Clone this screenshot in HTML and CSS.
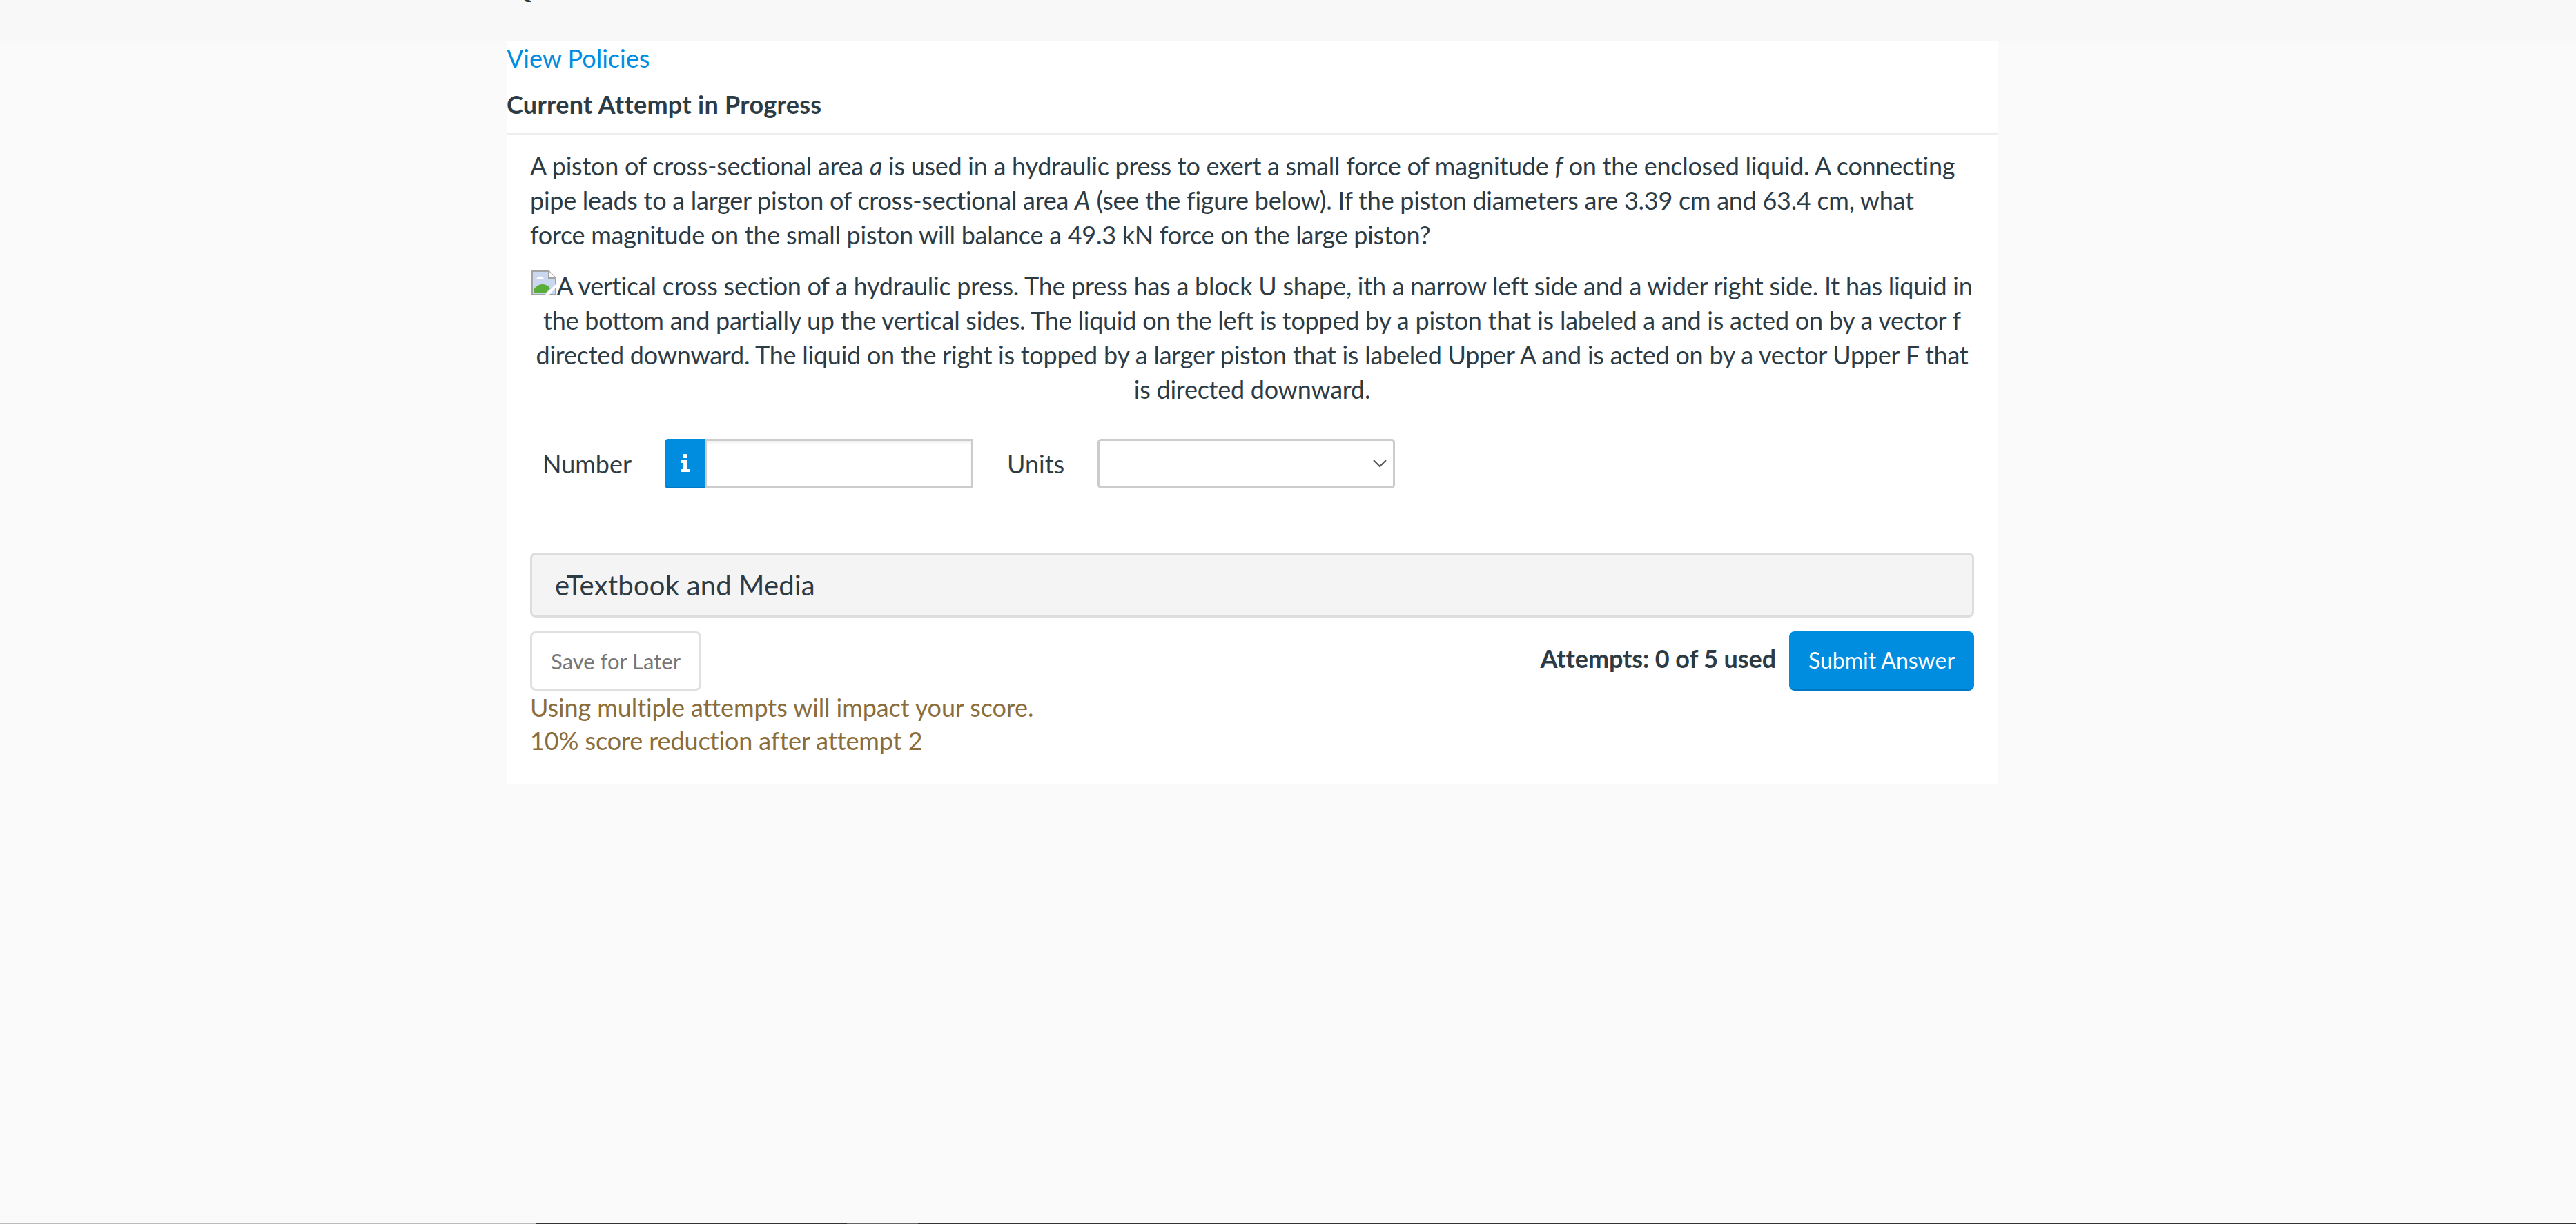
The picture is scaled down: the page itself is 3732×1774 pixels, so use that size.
FILE: index.html
```html
<!DOCTYPE html>
<html lang="en">
<head>
<meta charset="utf-8">
<title>Current Attempt in Progress</title>
<link rel="stylesheet" href="styles.css">
</head>
<body>
<div class="page">
  <header class="topbar"><div class="topbar-title">Question</div></header>
  <main class="card">
    <a class="policies" href="#">View Policies</a>
    <h2 class="attempt-title">Current Attempt in Progress</h2>
    <section class="question">
      <p class="stem">A piston of cross-sectional area <i>a</i> is used in a hydraulic press to exert a small force of magnitude <i>f</i> on the enclosed liquid. A connecting pipe leads to a larger piston of cross-sectional area <i>A</i> (see the figure below). If the piston diameters are 3.39 cm and 63.4 cm, what force magnitude on the small piston will balance a 49.3 kN force on the large piston?</p>
      <p class="figure"><svg class="broken" width="36" height="36" viewBox="0 0 36 36"><path d="M1 1H25L35 11V35H1Z" fill="#c9d7f1" stroke="#a3a3a3" stroke-width="2"/><path d="M25 1V11H35" fill="#fff" stroke="#a3a3a3" stroke-width="2"/><path d="M7 13q2-5 6-4q4-1 5 4Z" fill="#fff"/><path d="M3 33V28Q9 19 17 20Q24 21 27 26L20 33Z" fill="#5bad3a"/><path d="M19 36L36 19V24L25 36Z" fill="#fff"/></svg>A vertical cross section of a hydraulic press. The press has a block U shape, ith a narrow left side and a wider right side. It has liquid in the bottom and partially up the vertical sides. The liquid on the left is topped by a piston that is labeled a and is acted on by a vector f directed downward. The liquid on the right is topped by a larger piston that is labeled Upper A and is acted on by a vector Upper F that is directed downward.</p>
      <div class="answer-row">
        <label class="field-label">Number</label>
        <div class="input-group">
          <span class="info-btn"><svg width="14" height="26" viewBox="0 0 14 26"><rect x="3" y="0" width="7" height="6" rx="1.5" fill="#fff"/><path d="M1 9H10V22H13V26H1V22H4V13H1Z" fill="#fff"/></svg></span>
          <input class="number-input" type="text">
        </div>
        <label class="field-label units-label">Units</label>
        <div class="select-box"><svg width="20" height="12" viewBox="0 0 20 12"><path d="M1 1L10 10L19 1" fill="none" stroke="#555" stroke-width="2"/></svg></div>
      </div>
      <div class="panel">eTextbook and Media</div>
      <div class="actions">
        <button class="btn-save" type="button">Save for Later</button>
        <div class="submit-side">
          <span class="attempts">Attempts: 0 of 5 used</span>
          <button class="btn-submit" type="button">Submit Answer</button>
        </div>
      </div>
      <div class="warning">Using multiple attempts will impact your score.<br>10% score reduction after attempt 2</div>
    </section>
  </main>
  <div class="spacer"></div>
  <footer class="strip"><span class="strip-a"></span><span class="strip-b"></span><span class="strip-c"></span><span class="strip-d"></span></footer>
</div>
</body>
</html>
```

FILE: styles.css
```css
* { box-sizing: border-box; }
html, body { margin: 0; height: 100%; }
body { background: #fafafa; color: #2d3b45; font-family: Lato, "Liberation Sans", sans-serif; font-size: 36px; line-height: 50px; }
.page { height: 1774px; display: flex; flex-direction: column; overflow: hidden; }
.topbar { height: 60px; background: #f8f8f8; overflow: hidden; padding-left: 734px; flex: none; }
.topbar-title { font-size: 44px; line-height: 50px; margin-top: -45px; font-weight: 700; }
.card { width: 2160px; margin-left: 734px; height: 1077px; background: #fff; flex: none; }
.policies { display: block; color: #008de0; text-decoration: none; height: 50px; margin-top: -1px; }
.attempt-title { margin: 17px 0 0; font-size: 36px; letter-spacing: 0.27px; line-height: 50px; font-weight: 700; height: 70px; border-bottom: 3px solid #eee; }
.question { padding: 19px 34px 0; }
.stem { margin: 0 0 24px; padding-right: 10px; letter-spacing: -0.27px; }
.figure { margin: 0; text-align: center; letter-spacing: -0.25px; }
.broken { vertical-align: 0; }
.answer-row { display: flex; align-items: center; height: 72px; margin-top: 47px; }
.field-label { margin-left: 18px; width: 177px; }
.units-label { margin-left: 49px; width: 131px; }
.input-group { display: flex; width: 447px; height: 72px; }
.info-btn { width: 59px; background: #008de0; border-bottom: 2px solid #0077c2; border-radius: 5px 0 0 5px; display: flex; align-items: center; justify-content: center; }
.number-input { flex: 1; min-width: 0; border: 3px solid #ccc; border-left-width: 2px; border-radius: 0; background: #fff; box-shadow: inset 0 3px 3px rgba(0,0,0,.06); }
.select-box { width: 431px; height: 72px; border: 3px solid #ccc; border-radius: 5px; background: #fff; display: flex; align-items: center; justify-content: flex-end; padding-right: 9px; }
.panel { margin-top: 93px; height: 94px; background: #f4f4f4; border: 3px solid #ddd; border-radius: 8px; padding: 0 33px; font-size: 40px; letter-spacing: 0.2px; line-height: 88px; color: #2d3b45; }
.actions { display: flex; justify-content: space-between; align-items: flex-start; margin-top: 20px; height: 86px; }
.btn-save { width: 248px; height: 86px; background: #fff; border: 3px solid #e0e0e0; border-radius: 8px; color: #777; font: 31px/40px Lato, "Liberation Sans", sans-serif; padding: 0; }
.submit-side { display: flex; align-items: flex-start; }
.attempts { font-weight: 700; line-height: 50px; margin-top: 14px; margin-right: 19px; letter-spacing: -0.1px; }
.btn-submit { width: 268px; height: 86px; background: #008de0; border: 0; border-bottom: 2px solid #0077c2; border-radius: 8px; color: #fff; font: 32px/40px Lato, "Liberation Sans", sans-serif; padding: 0; }
.warning { color: #8a6d3b; line-height: 48px; margin-top: 0; letter-spacing: -0.1px; }
.spacer { flex: 1; }
.strip { height: 2px; display: flex; flex: none; }
.strip-a { width: 776px; background: #bbb; }
.strip-b { width: 451px; background: #333; }
.strip-c { width: 103px; background: #666; }
.strip-d { flex: 1; background: #333; }
```
